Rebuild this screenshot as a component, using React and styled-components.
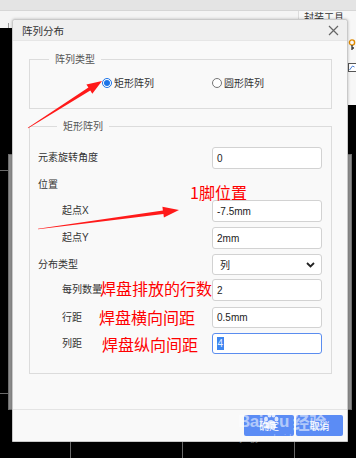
import React from "react";
import styled, { createGlobalStyle } from "styled-components";

const GlobalStyle = createGlobalStyle`
  html, body { margin: 0; padding: 0; background: #000; }
  body { font-family: "Noto Sans CJK SC", "Noto Sans", sans-serif; overflow: hidden; }
  * { box-sizing: border-box; }
`;

const CJK = `"Noto Sans CJK SC", "Noto Sans", sans-serif`;
const LATIN = `"Liberation Sans", "Noto Sans CJK SC", sans-serif`;

const Page = styled.div`
  position: relative;
  width: 356px;
  height: 458px;
  overflow: hidden;
  background: #000;
  display: flex;
  flex-direction: column;
`;

const Toolbar = styled.div`
  height: 11px;
  background: #e4e4e4;
  border-bottom: 1px solid #d6d6d6;
  flex: none;
`;

const Workspace = styled.div`
  flex: 1;
  display: flex;
`;

const CanvasCol = styled.div`
  flex: 1;
  display: flex;
  flex-direction: column;
`;

const Ruler = styled.div`
  height: 17px;
  background: #f4f4f4;
  display: flex;
  align-items: flex-end;
  flex: none;
`;

const Tick = styled.div`
  width: ${(p) => p.$w}px;
  flex: none;
  height: ${(p) => p.$h}px;
  border-left: 1px solid #9a9a9a;
  font: 7px ${LATIN};
  color: #9a9a9a;
  padding-left: 1px;
  line-height: 6px;
  align-self: flex-end;
`;

const Canvas = styled.div`
  flex: 1;
  background:
    linear-gradient(#6a6a6a, #6a6a6a) 0 142px / 100% 1px no-repeat,
    linear-gradient(#6a6a6a, #6a6a6a) 0 365px / 100% 1px no-repeat,
    linear-gradient(#6a6a6a, #6a6a6a) 70px 0 / 1px 100% no-repeat,
    linear-gradient(#6a6a6a, #6a6a6a) 182px 0 / 1px 100% no-repeat,
    linear-gradient(#6a6a6a, #6a6a6a) 294px 0 / 1px 100% no-repeat,
    #000;
`;

const SidePanel = styled.div`
  width: 58px;
  flex: none;
  display: flex;
  flex-direction: column;
`;

const PanelTab = styled.div`
  height: 94px;
  background: #f7f7f7;
  border-left: 1px solid #dcdcdc;
  font: 10px ${CJK};
  color: #333;
  padding: 0 0 0 5px;
  line-height: 12px;
  display: flex;
  flex-direction: column;
  align-items: flex-end;
  gap: 10px;
`;

const PanelTabLabel = styled.div`
  align-self: flex-start;
  white-space: nowrap;
`;

const PanelIcons = styled.div`
  width: 8px;
  display: flex;
  flex-direction: column;
  gap: 12px;
  margin-top: 6px;
`;

const PanelBottom = styled.div`
  flex: 1;
  background: #000;
`;

const BackWindow = styled.div`
  position: absolute;
  left: 8px;
  top: 154px;
  width: 344px;
  height: 256px;
  background: #8e8e8e;
  border: 1px solid #6d6d6d;
`;

const Dialog = styled.div`
  position: absolute;
  left: 12px;
  top: 19px;
  width: 336px;
  height: 423px;
  background: #f9f9f9;
  border: 1px solid #c9c9c9;
  border-radius: 3px 3px 0 0;
  box-shadow: 0 0 3px rgba(0, 0, 0, 0.25);
  display: flex;
  flex-direction: column;
`;

const TitleBar = styled.div`
  height: 21px;
  flex: none;
  background: #efefef;
  border-bottom: 1px solid #e6e6e6;
  border-radius: 3px 3px 0 0;
  display: flex;
  align-items: center;
  justify-content: space-between;
  padding: 0 8px 0 9px;
  font: 10.5px ${CJK};
  color: #333;
`;

const Body = styled.div`
  flex: 1;
  padding: 12px 15px 0 16px;
  display: flex;
  flex-direction: column;
  gap: 11px;
`;

const Group = styled.fieldset`
  margin: 0;
  border: 1px solid #dcdcdc;
  padding: ${(p) => p.$pad};
  min-width: 0;
  height: ${(p) => p.$h}px;
  display: flex;
  flex-direction: column;
`;

const Legend = styled.legend`
  margin-left: 19px;
  padding: 0 6px;
  font: 10px/12px ${CJK};
  color: #555;
`;

const RadioRow = styled.div`
  display: flex;
  align-items: center;
  padding-left: 72px;
`;

const RadioItem = styled.label`
  display: flex;
  align-items: center;
  width: 110px;
  gap: 2px;
  font: 10px/12px ${CJK};
  color: #333;
`;

const RadioDot = styled.span`
  width: 10px;
  height: 10px;
  border-radius: 50%;
  border: 1px solid ${(p) => (p.$on ? "#1a73e8" : "#767676")};
  background: #fff;
  display: flex;
  align-items: center;
  justify-content: center;
  flex: none;
  &::after {
    content: "";
    width: 6px;
    height: 6px;
    border-radius: 50%;
    background: ${(p) => (p.$on ? "#1a73e8" : "transparent")};
  }
`;

const Row = styled.div`
  display: flex;
  align-items: center;
  justify-content: space-between;
  margin-top: ${(p) => p.$mt}px;
  height: ${(p) => p.$h}px;
  flex: none;
`;

const Label = styled.div`
  padding-left: ${(p) => (p.$indent ? 24 : 0)}px;
  font: 10px/12px ${LATIN};
  color: #333;
  white-space: nowrap;
`;

const Input = styled.div`
  width: 110px;
  height: 100%;
  background: #fff;
  border: 1px solid ${(p) => (p.$focus ? "#5b8def" : "#d2d2d2")};
  border-radius: 3px;
  display: flex;
  align-items: center;
  justify-content: space-between;
  padding: 0 6px 0 4px;
  font: 10px ${LATIN};
  color: #222;
`;

const Selected = styled.span`
  background: #3d86f0;
  color: #e8f0ff;
  padding: 0 0.5px;
  line-height: 13px;
`;

const Footer = styled.div`
  height: 32px;
  flex: none;
  border-top: 1px solid #e4e4e4;
  display: flex;
  justify-content: flex-end;
  padding: 5px 4px 0 0;
  gap: 2px;
`;

const Button = styled.div`
  width: ${(p) => p.$w}px;
  height: 21px;
  background: #5b8cf5;
  border-radius: 2px;
  color: #fff;
  font: 10px ${CJK};
  display: flex;
  align-items: center;
  justify-content: center;
`;

const Overlay = styled.svg`
  position: absolute;
  left: 0;
  top: 0;
  pointer-events: none;
`;

const Note = styled.div`
  position: absolute;
  left: ${(p) => p.$x}px;
  top: ${(p) => p.$y}px;
  font: 16px/18px ${CJK};
  color: #ff0000;
  white-space: nowrap;
`;

const Watermark = styled.div`
  position: absolute;
  left: 238px;
  top: 412px;
  color: rgba(255, 255, 255, 0.55);
  display: flex;
  flex-direction: column;
  align-items: flex-start;
  pointer-events: none;
`;

const WmTop = styled.div`
  display: flex;
  align-items: flex-end;
  font: bold 17px/20px ${LATIN};
  letter-spacing: -0.5px;
`;

const WmBottom = styled.div`
  font: 9px/10px ${LATIN};
  margin-left: 2px;
  margin-top: 1px;
  letter-spacing: 0.3px;
  color: rgba(255, 255, 255, 0.4);
`;

function arrow(x1, y1, x2, y2, headLen, headW, tailW, shaftW) {
  const dx = x2 - x1;
  const dy = y2 - y1;
  const L = Math.hypot(dx, dy);
  const ux = dx / L;
  const uy = dy / L;
  const nx = -uy;
  const ny = ux;
  const bx = x2 - ux * headLen;
  const by = y2 - uy * headLen;
  const p = (x, y) => `${x.toFixed(1)},${y.toFixed(1)}`;
  return [
    p(x1 + nx * tailW / 2, y1 + ny * tailW / 2),
    p(bx + nx * shaftW / 2, by + ny * shaftW / 2),
    p(bx + nx * headW / 2, by + ny * headW / 2),
    p(x2, y2),
    p(bx - nx * headW / 2, by - ny * headW / 2),
    p(bx - nx * shaftW / 2, by - ny * shaftW / 2),
    p(x1 - nx * tailW / 2, y1 - ny * tailW / 2),
  ].join(" ");
}

const rows = [
  { label: "起点X", indent: true, value: "-7.5mm", mt: 7, h: 22 },
  { label: "起点Y", indent: true, value: "2mm", mt: 5, h: 22 },
];

export default function App() {
  return (
    <Page>
      <GlobalStyle />
      <Toolbar />
      <Workspace>
        <CanvasCol>
          <Ruler>
            <Tick $w={62} $h={5} style={{ marginLeft: 8 }} />
            <Tick $w={88} $h={9}>8</Tick>
            <Tick $w={89} $h={9}>2</Tick>
            <Tick $w={51} $h={9}>4</Tick>
          </Ruler>
          <Canvas />
        </CanvasCol>
        <SidePanel>
          <PanelTab>
            <PanelTabLabel>封装工具</PanelTabLabel>
            <PanelIcons>
              <svg width="8" height="12" viewBox="0 0 8 12">
                <circle cx="4" cy="3.5" r="2.6" fill="none" stroke="#e08a00" strokeWidth="1.4" />
                <path d="M4 6v5M4 9h2" stroke="#333" strokeWidth="1.3" fill="none" />
              </svg>
              <svg width="8" height="9" viewBox="0 0 8 9">
                <rect x="0.5" y="0.5" width="8" height="8" fill="#fff" stroke="#555" />
                <path d="M1.5 7l3-4 2 1" stroke="#4a7fd6" fill="none" />
              </svg>
            </PanelIcons>
          </PanelTab>
          <PanelBottom />
        </SidePanel>
      </Workspace>

      <BackWindow />

      <Dialog>
        <TitleBar>
          <span>阵列分布</span>
          <svg width="11" height="11" viewBox="0 0 11 11">
            <path d="M1 1l9 9M10 1l-9 9" stroke="#666" strokeWidth="1.2" />
          </svg>
        </TitleBar>
        <Body>
          <Group $h={56} $pad="12px 0 0 0">
            <Legend>阵列类型</Legend>
            <RadioRow>
              <RadioItem>
                <RadioDot $on />
                矩形阵列
              </RadioItem>
              <RadioItem>
                <RadioDot />
                圆形阵列
              </RadioItem>
            </RadioRow>
          </Group>

          <Group $h={254} $pad="0 9px 0 8px">
            <Legend>矩形阵列</Legend>
            <Row $mt={15} $h={22}>
              <Label>元素旋转角度</Label>
              <Input>0</Input>
            </Row>
            <Row $mt={8} $h={16}>
              <Label>位置</Label>
            </Row>
            {rows.map((r) => (
              <Row key={r.label} $mt={r.mt} $h={r.h}>
                <Label $indent={r.indent}>{r.label}</Label>
                <Input>{r.value}</Input>
              </Row>
            ))}
            <Row $mt={5} $h={21}>
              <Label>分布类型</Label>
              <Input>
                <span style={{ paddingLeft: 3 }}>列</span>
                <svg width="9" height="6" viewBox="0 0 9 6">
                  <path d="M1 1l3.5 3.5L8 1" stroke="#222" strokeWidth="1.8" fill="none" />
                </svg>
              </Input>
            </Row>
            <Row $mt={4} $h={22}>
              <Label $indent>每列数量</Label>
              <Input>2</Input>
            </Row>
            <Row $mt={6} $h={21}>
              <Label $indent>行距</Label>
              <Input>0.5mm</Input>
            </Row>
            <Row $mt={5} $h={21}>
              <Label $indent>列距</Label>
              <Input $focus>
                <Selected>4</Selected>
              </Input>
            </Row>
          </Group>
        </Body>
        <Footer>
          <Button $w={50}>确定</Button>
          <Button $w={47}>取消</Button>
        </Footer>
      </Dialog>

      <Note $x={190} $y={183}>1脚位置</Note>
      <Note $x={100} $y={279}>焊盘排放的行数</Note>
      <Note $x={99} $y={308}>焊盘横向间距</Note>
      <Note $x={102} $y={335}>焊盘纵向间距</Note>

      <Overlay width="356" height="458" viewBox="0 0 356 458">
        <polygon points={arrow(28, 128, 102, 81, 15, 11, 0.6, 3.5)} fill="#ff1a1a" />
        <polygon points={arrow(38, 229, 179, 210, 16, 11, 0.6, 3.5)} fill="#ff1a1a" />
      </Overlay>

      <Watermark>
        <WmTop>
          <span>Bai</span>
          <svg width="16" height="18" viewBox="0 0 16 18" style={{ margin: "0 0 2px 0" }}>
            <g fill="rgba(255,255,255,0.8)">
              <ellipse cx="3" cy="7" rx="2" ry="2.6" />
              <ellipse cx="6.5" cy="3" rx="2" ry="2.6" />
              <ellipse cx="10.5" cy="3" rx="2" ry="2.6" />
              <ellipse cx="13.5" cy="7" rx="2" ry="2.6" />
              <path d="M8 8c-3 0-6 5-5 7.5 1 2 4 1 5 1s4 1 5-1c1-2.5-2-7.5-5-7.5z" />
            </g>
          </svg>
          <span>u</span>
          <span style={{ fontFamily: CJK, marginLeft: 4, fontWeight: 700 }}>经验</span>
        </WmTop>
        <WmBottom>jingyan.baidu.com</WmBottom>
      </Watermark>
    </Page>
  );
}
